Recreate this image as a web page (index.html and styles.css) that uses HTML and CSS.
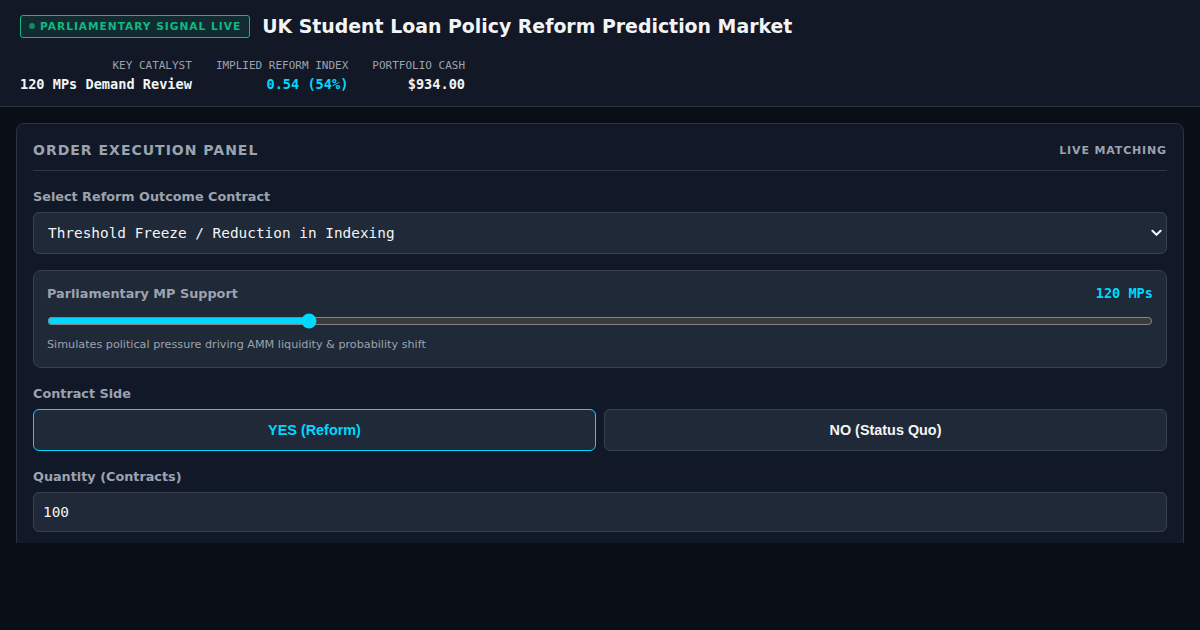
FILE: index.html
```html
<!DOCTYPE html>
<html lang="en">
<head>
<meta charset="utf-8">
<title>UK Student Loan Policy Reform Prediction Market</title>
<link rel="stylesheet" href="styles.css">
</head>
<body>
<header class="topbar">
  <div class="title-row">
    <span class="badge"><span class="badge-dot"></span>PARLIAMENTARY SIGNAL LIVE</span>
    <h1 class="title">UK Student Loan Policy Reform Prediction Market</h1>
  </div>
  <div class="stats">
    <div class="stat">
      <div class="stat-label">KEY CATALYST</div>
      <div class="stat-value">120 MPs Demand Review</div>
    </div>
    <div class="stat">
      <div class="stat-label">IMPLIED REFORM INDEX</div>
      <div class="stat-value accent">0.54 (54%)</div>
    </div>
    <div class="stat">
      <div class="stat-label">PORTFOLIO CASH</div>
      <div class="stat-value">$934.00</div>
    </div>
  </div>
</header>

<main class="workspace">
  <section class="panel">
    <div class="panel-head">
      <h2 class="panel-title">ORDER EXECUTION PANEL</h2>
      <span class="panel-tag">LIVE MATCHING</span>
    </div>

    <label class="field-label" for="contract">Select Reform Outcome Contract</label>
    <div class="select-wrap">
      <select id="contract" class="select">
        <option>Threshold Freeze / Reduction in Indexing</option>
      </select>
      <svg class="chevron" viewBox="0 0 12 8" width="11" height="8"><path d="M1.5 1.5 6 6l4.5-4.5" fill="none" stroke="#f3f4f6" stroke-width="2.2" stroke-linecap="round" stroke-linejoin="round"/></svg>
    </div>

    <div class="support-box">
      <div class="support-head">
        <span class="support-label">Parliamentary MP Support</span>
        <span class="support-value">120 MPs</span>
      </div>
      <input class="range" type="range" min="50" max="350" value="120">
      <p class="hint">Simulates political pressure driving AMM liquidity &amp; probability shift</p>
    </div>

    <div class="field-label">Contract Side</div>
    <div class="sides">
      <button class="side side-active">YES (Reform)</button>
      <button class="side">NO (Status Quo)</button>
    </div>

    <label class="field-label" for="qty">Quantity (Contracts)</label>
    <input id="qty" class="qty" type="text" value="100">
  </section>
</main>
</body>
</html>
```

FILE: styles.css
```css
* { box-sizing: border-box; }

html, body {
  margin: 0;
  background: #0a0e17;
  color: #f3f4f6;
  font-family: "DejaVu Sans", sans-serif;
}

.topbar {
  background: #121826;
  border-bottom: 1px solid #2a3342;
  padding: 14px 20px 14px;
}

.title-row {
  display: flex;
  align-items: center;
  gap: 12px;
  height: 24px;
}

.badge {
  display: inline-flex;
  align-items: center;
  gap: 5px;
  height: 23px;
  padding: 0 8px;
  border: 1px solid #10b981;
  border-radius: 3px;
  background: rgba(16, 185, 129, 0.12);
  color: #10b981;
  font-size: 10.6px;
  font-weight: bold;
  letter-spacing: 1px;
}

.badge-dot {
  width: 6px;
  height: 6px;
  border-radius: 50%;
  background: #0f8a62;
}

.title {
  margin: 0;
  font-size: 18.9px;
  font-weight: bold;
  color: #f3f4f6;
}

.stats {
  display: flex;
  gap: 24px;
  margin-top: 21px;
  font-family: "DejaVu Sans Mono", monospace;
}

.stat {
  display: flex;
  flex-direction: column;
  align-items: flex-end;
  gap: 4px;
}

.stat-label {
  font-size: 11px;
  color: #9ca3af;
}

.stat-value {
  font-size: 13.6px;
  font-weight: bold;
  color: #f3f4f6;
}

.accent { color: #00d8ff; }

.workspace {
  height: 436px;
  overflow: hidden;
  padding: 16px 16px 0;
}

.panel {
  background: #111827;
  border: 1px solid #2a3342;
  border-radius: 8px;
  padding: 16px 16px 24px;
}

.panel-head {
  display: flex;
  justify-content: space-between;
  align-items: center;
  padding: 2px 0 12px;
  border-bottom: 1px solid #2e3746;
  margin-bottom: 18px;
}

.panel-title {
  margin: 0;
  font-size: 14px;
  font-weight: bold;
  letter-spacing: 1px;
  color: #9ca3af;
}

.panel-tag {
  font-size: 11px;
  font-weight: bold;
  letter-spacing: 0.85px;
  color: #9ca3af;
}

.field-label {
  display: block;
  font-size: 12.8px;
  font-weight: bold;
  color: #9ca3af;
  margin-bottom: 8px;
}

.select-wrap {
  position: relative;
  margin-bottom: 16px;
}

.select {
  display: block;
  width: 100%;
  height: 42px;
  appearance: none;
  background: #1f2937;
  border: 1px solid #374151;
  border-radius: 6px;
  color: #f3f4f6;
  font-family: "DejaVu Sans Mono", monospace;
  font-size: 14.4px;
  padding: 0 14px;
}

.chevron {
  position: absolute;
  right: 5px;
  top: 17px;
  pointer-events: none;
}

.support-box {
  background: #1f2937;
  border: 1px solid #374151;
  border-radius: 8px;
  padding: 14px 13px 16px;
  margin-bottom: 18px;
}

.support-head {
  display: flex;
  justify-content: space-between;
  align-items: center;
}

.support-label {
  font-size: 12.8px;
  font-weight: bold;
  color: #9ca3af;
}

.support-value {
  font-family: "DejaVu Sans Mono", monospace;
  font-size: 13.6px;
  font-weight: bold;
  color: #00d8ff;
}

.range {
  display: block;
  width: 100%;
  margin: 12px 0 0;
  accent-color: #00d8ff;
  color-scheme: dark;
}

.hint {
  margin: 9px 0 0;
  font-size: 11.2px;
  color: #9ca3af;
}

.sides {
  display: flex;
  gap: 8px;
  margin-bottom: 18px;
}

.side {
  flex: 1;
  height: 42px;
  background: #1f2937;
  border: 1px solid #374151;
  border-radius: 6px;
  color: #f3f4f6;
  font-family: "Liberation Sans", Arial, sans-serif;
  font-size: 14.4px;
  font-weight: bold;
}

.side-active {
  border-color: #00d8ff;
  color: #00d8ff;
}

.qty {
  display: block;
  width: 100%;
  height: 40px;
  background: #1f2937;
  border: 1px solid #374151;
  border-radius: 6px;
  color: #f3f4f6;
  font-family: "DejaVu Sans Mono", monospace;
  font-size: 14.4px;
  padding: 0 9px;
}
```
